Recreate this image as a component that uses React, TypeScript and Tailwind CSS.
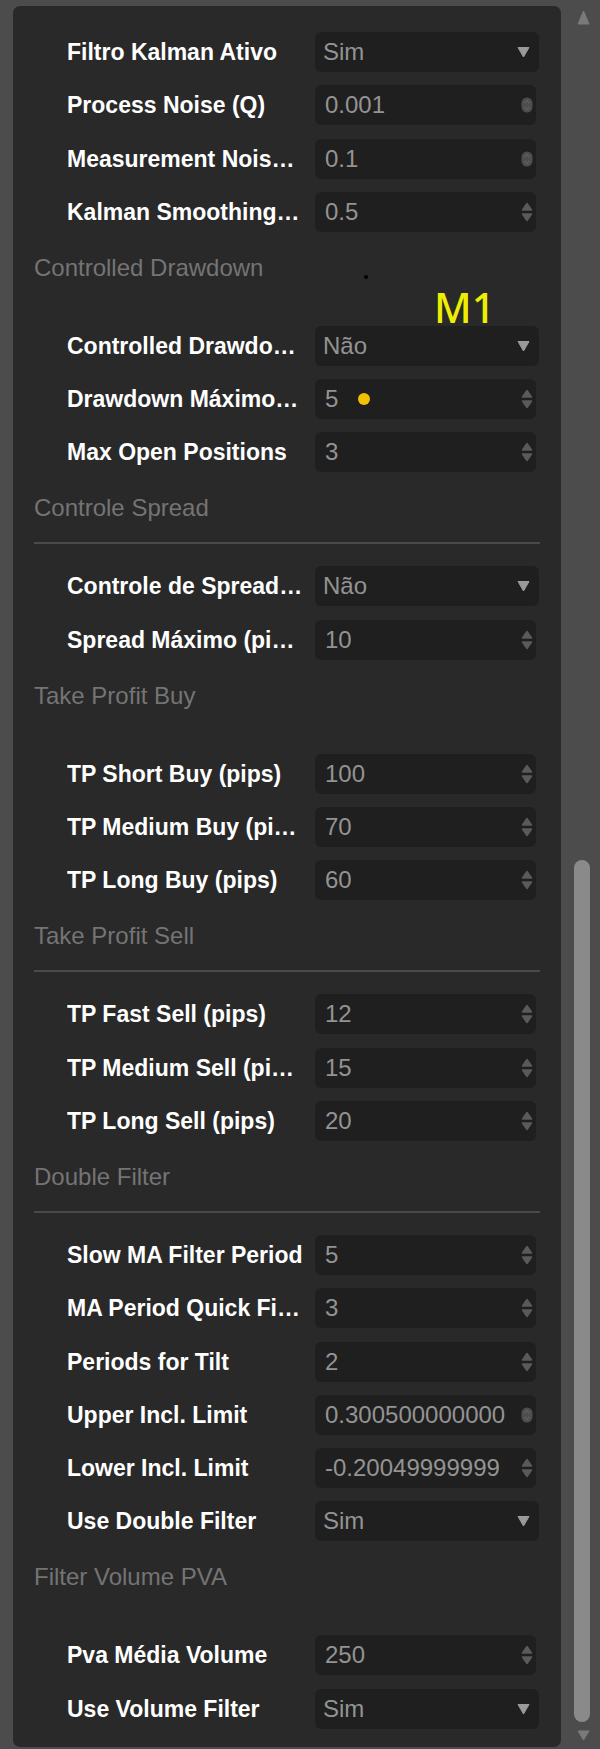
import React from "react";

type RowDef = {
  label: string;
  kind: "select" | "number";
  value: string;
  spin?: "arrows" | "blob";
  dot?: boolean;
};

type Section = { title?: string; divider?: boolean; rows: RowDef[] };

const sections: Section[] = [
  {
    rows: [
      { label: "Filtro Kalman Ativo", kind: "select", value: "Sim" },
      { label: "Process Noise (Q)", kind: "number", value: "0.001", spin: "blob" },
      { label: "Measurement Noise (R)", kind: "number", value: "0.1", spin: "blob" },
      { label: "Kalman Smoothing Factor", kind: "number", value: "0.5" },
    ],
  },
  {
    title: "Controlled Drawdown",
    divider: false,
    rows: [
      { label: "Controlled Drawdown Ativo", kind: "select", value: "Não" },
      { label: "Drawdown Máximo (%)", kind: "number", value: "5", dot: true },
      { label: "Max Open Positions", kind: "number", value: "3" },
    ],
  },
  {
    title: "Controle Spread",
    divider: true,
    rows: [
      { label: "Controle de Spread Ativo", kind: "select", value: "Não" },
      { label: "Spread Máximo (pips)", kind: "number", value: "10" },
    ],
  },
  {
    title: "Take Profit Buy",
    divider: false,
    rows: [
      { label: "TP Short Buy (pips)", kind: "number", value: "100" },
      { label: "TP Medium Buy (pips)", kind: "number", value: "70" },
      { label: "TP Long Buy (pips)", kind: "number", value: "60" },
    ],
  },
  {
    title: "Take Profit Sell",
    divider: true,
    rows: [
      { label: "TP Fast Sell (pips)", kind: "number", value: "12" },
      { label: "TP Medium Sell (pips)", kind: "number", value: "15" },
      { label: "TP Long Sell (pips)", kind: "number", value: "20" },
    ],
  },
  {
    title: "Double Filter",
    divider: true,
    rows: [
      { label: "Slow MA Filter Period", kind: "number", value: "5" },
      { label: "MA Period Quick Filter", kind: "number", value: "3" },
      { label: "Periods for Tilt", kind: "number", value: "2" },
      { label: "Upper Incl. Limit", kind: "number", value: "0.30050000000000004", spin: "blob" },
      { label: "Lower Incl. Limit", kind: "number", value: "-0.20049999999" },
      { label: "Use Double Filter", kind: "select", value: "Sim" },
    ],
  },
  {
    title: "Filter Volume PVA",
    divider: false,
    rows: [
      { label: "Pva Média Volume", kind: "number", value: "250" },
      { label: "Use Volume Filter", kind: "select", value: "Sim" },
    ],
  },
];

function SpinArrows() {
  return (
    <svg width="12" height="22" viewBox="0 0 12 22" className="shrink-0">
      <path d="M1.5 9 L6 2.5 L10.5 9 Z" fill="#5a5a5a" stroke="#5a5a5a" strokeWidth="1.5" strokeLinejoin="round" />
      <path d="M1.5 13 L6 19.5 L10.5 13 Z" fill="#5a5a5a" stroke="#5a5a5a" strokeWidth="1.5" strokeLinejoin="round" />
    </svg>
  );
}

function SpinBlob() {
  return (
    <svg width="12" height="22" viewBox="0 0 12 22" className="shrink-0">
      <rect x="0.5" y="3.5" width="11" height="15" rx="5.5" fill="#4e4e4e" />
      <path d="M3.5 9 L6 6.5 L8.5 9" fill="none" stroke="#616161" strokeWidth="1.2" />
      <path d="M3.5 13 L6 15.5 L8.5 13" fill="none" stroke="#616161" strokeWidth="1.2" />
    </svg>
  );
}

function SelectArrow() {
  return (
    <svg width="13" height="12" viewBox="0 0 13 12" className="shrink-0">
      <path d="M1 1.5 L12 1.5 L6.5 11 Z" fill="#9a9a9a" stroke="#9a9a9a" strokeWidth="1" strokeLinejoin="round" />
    </svg>
  );
}

function Row({ r }: { r: RowDef }) {
  return (
    <div className="flex h-[42px] items-center pl-[33px]">
      <div className="w-[237px] shrink-0 truncate text-[23px] font-bold leading-[28px] text-white">
        {r.label}
      </div>
      <div className="ml-[11px]">
        {r.kind === "select" ? (
          <div className="flex h-[40px] w-[224px] items-center rounded-[6px] bg-[#1f1f1f] pl-[8px] pr-[9px]">
            <div className="flex-1 text-[24px] leading-[28px] text-[#939393]">{r.value}</div>
            <SelectArrow />
          </div>
        ) : (
          <div className="flex h-[40px] w-[221px] items-center rounded-[6px] bg-[#1f1f1f] pl-[10px] pr-[3px]">
            <div className="mr-[15px] flex min-w-0 flex-1 items-center overflow-hidden whitespace-nowrap text-[24px] leading-[28px] text-[#939393]">
              <span>{r.value}</span>
              {r.dot && <span className="ml-[20px] inline-block h-[12px] w-[12px] shrink-0 rounded-full bg-[#f2c200]" />}
            </div>
            {r.spin === "blob" ? <SpinBlob /> : <SpinArrows />}
          </div>
        )}
      </div>
    </div>
  );
}

export default function App() {
  return (
    <div
      className="flex h-[1749px] w-[600px] overflow-hidden bg-[#4c4c4c]"
      style={{ fontFamily: '"Liberation Sans", Arial, sans-serif' }}
    >
      <div className="pl-[13px] pt-[6px]">
        <div className="relative h-[1741px] w-[548px] overflow-hidden rounded-[7px] bg-[#292929] px-[21px] pt-[25px]">
          {sections.map((s, i) => (
            <div key={i}>
              {s.title && (
                <>
                  <div className="mt-[21px] mb-[20px] text-[24px] leading-[28px] text-[#747474]">{s.title}</div>
                  <div className={s.divider ? "h-[2px] bg-[#4a4a4a]" : "h-[2px] bg-transparent"} />
                  <div className="h-[21px]" />
                </>
              )}
              <div className="flex flex-col gap-[11.3px]">
                {s.rows.map((r, j) => (
                  <Row key={j} r={r} />
                ))}
              </div>
            </div>
          ))}
          <div className="absolute left-[351px] top-[269px] h-[4px] w-[4px] rounded-full bg-black" />
          <div
            className="absolute left-[421px] top-[281px] text-[41px] font-medium leading-none text-[#eeee00]"
            style={{ fontFamily: '"Noto Sans", sans-serif' }}
          >
            M1
          </div>
        </div>
      </div>
      <div className="flex w-[39px] flex-col pl-[16px] pt-[10px]">
        <svg width="13" height="15" viewBox="0 0 13 15">
          <path d="M6.5 1 L12 14 L1 14 Z" fill="#7a7a7a" stroke="#7a7a7a" strokeLinejoin="round" />
        </svg>
        <div className="ml-[-3px] mt-[835px] h-[862px] w-[16px] rounded-full bg-[#8a8a8a]" />
        <svg className="mt-[8px]" width="13" height="11" viewBox="0 0 13 11">
          <path d="M1 1 L12 1 L6.5 10 Z" fill="#7a7a7a" stroke="#7a7a7a" strokeLinejoin="round" />
        </svg>
      </div>
    </div>
  );
}
